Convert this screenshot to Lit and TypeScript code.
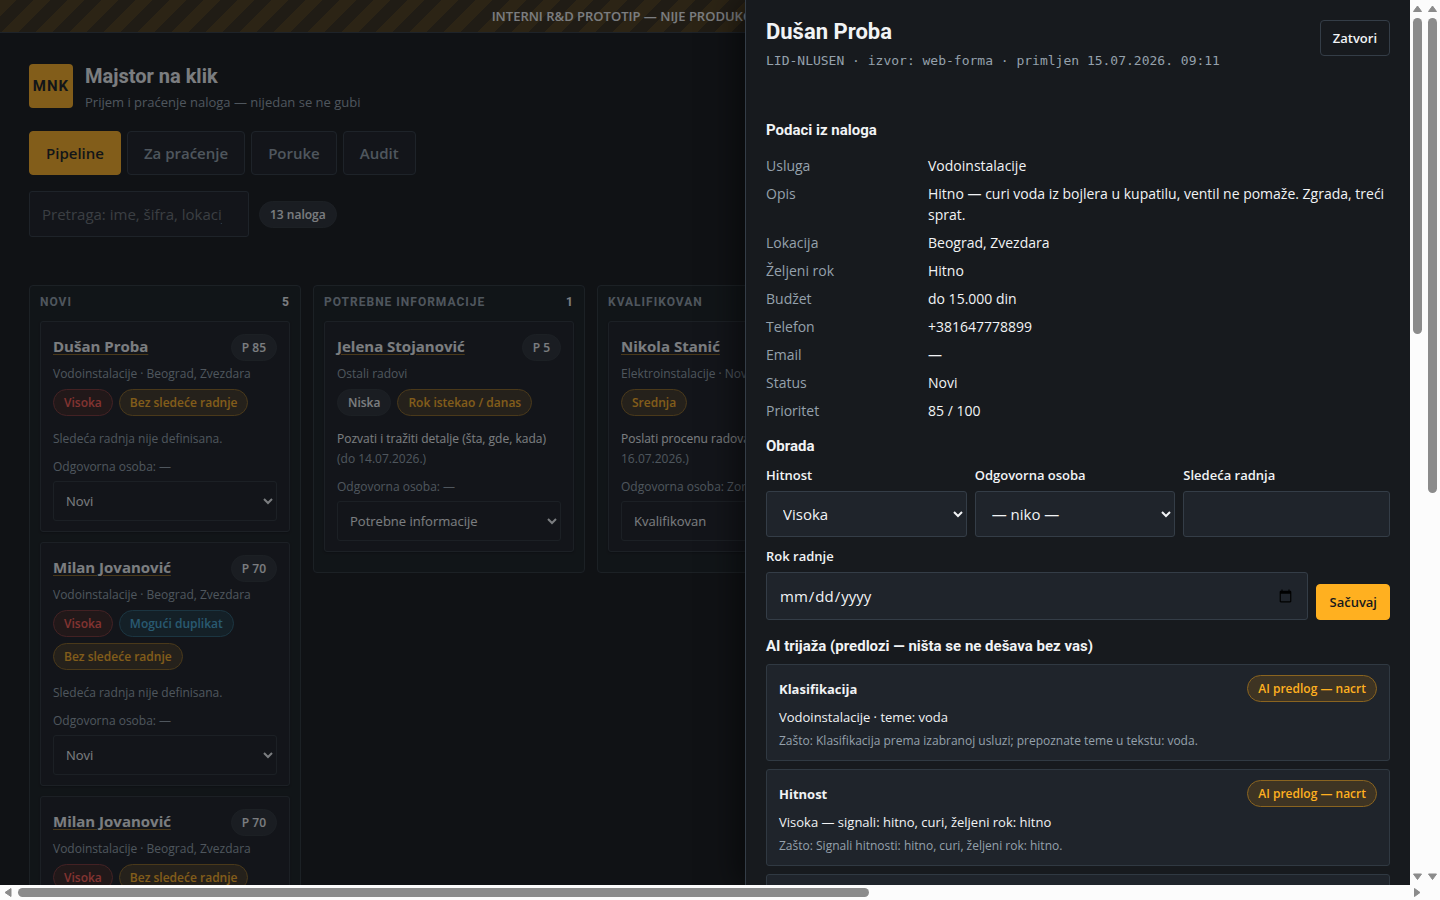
import { LitElement, html, css, svg } from "lit";
import { customElement, property } from "lit/decorators.js";
import { classMap } from "lit/directives/class-map.js";
import { styleMap } from "lit/directives/style-map.js";

type Tone = "danger" | "warn" | "info" | "plain";

interface Tag {
  text: string;
  tone: Tone;
}

interface Lead {
  name: string;
  score: number;
  about: string;
  tags: Tag[];
  next?: string;
  due?: string;
  owner: string;
}

interface Column {
  title: string;
  count: number;
  leads: Lead[];
}

const visoka: Tag = { text: "Visoka", tone: "danger" };
const bezRadnje: Tag = { text: "Bez sledeće radnje", tone: "warn" };

const milan: Lead = {
  name: "Milan Jovanović",
  score: 70,
  about: "Vodoinstalacije · Beograd, Zvezdara",
  tags: [visoka, bezRadnje],
  owner: "—",
};

const columns: Column[] = [
  {
    title: "Novi",
    count: 5,
    leads: [
      { ...milan, name: "Dušan Proba", score: 85 },
      { ...milan, tags: [visoka, { text: "Mogući duplikat", tone: "info" }, bezRadnje] },
      milan,
    ],
  },
  {
    title: "Potrebne informacije",
    count: 1,
    leads: [
      {
        name: "Jelena Stojanović",
        score: 5,
        about: "Ostali radovi",
        tags: [
          { text: "Niska", tone: "plain" },
          { text: "Rok istekao / danas", tone: "warn" },
        ],
        next: "Pozvati i tražiti detalje (šta, gde, kada)",
        due: "(do 14.07.2026.)",
        owner: "—",
      },
    ],
  },
  {
    title: "Kvalifikovan",
    count: 1,
    leads: [
      {
        name: "Nikola Stanić",
        score: 45,
        about: "Elektroinstalacije · Novi Sad",
        tags: [{ text: "Srednja", tone: "warn" }],
        next: "Poslati procenu radova (do",
        due: "16.07.2026.)",
        owner: "Zoran",
      },
    ],
  },
];

const facts: [string, string][] = [
  ["Usluga", "Vodoinstalacije"],
  ["Opis", "Hitno — curi voda iz bojlera u kupatilu, ventil ne pomaže. Zgrada, treći sprat."],
  ["Lokacija", "Beograd, Zvezdara"],
  ["Željeni rok", "Hitno"],
  ["Budžet", "do 15.000 din"],
  ["Telefon", "+381647778899"],
  ["Email", "—"],
  ["Status", "Novi"],
  ["Prioritet", "85 / 100"],
];

const suggestions = [
  {
    title: "Klasifikacija",
    text: "Vodoinstalacije · teme: voda",
    why: "Zašto: Klasifikacija prema izabranoj usluzi; prepoznate teme u tekstu: voda.",
  },
  {
    title: "Hitnost",
    text: "Visoka — signali: hitno, curi, željeni rok: hitno",
    why: "Zašto: Signali hitnosti: hitno, curi, željeni rok: hitno.",
  },
  {
    title: "Prioritet",
    text: "85 / 100",
    why: "Zašto: Hitnost i lokacija su poznati.",
  },
];

@customElement("scroll-track")
class ScrollTrack extends LitElement {
  @property() axis: "x" | "y" = "y";
  @property({ type: Number }) size = 50;

  static styles = css`
    :host {
      display: flex;
      background: #fcfcfc;
    }
    .bar {
      display: flex;
      flex: 1;
      align-items: center;
    }
    .bar.y {
      flex-direction: column;
    }
    .rail {
      display: flex;
      flex: 1;
      align-self: stretch;
      padding: 3px 0;
    }
    .y .rail {
      padding: 0 3px;
    }
    .x .rail {
      flex-direction: column;
    }
    .thumb {
      border-radius: 5px;
      background: #8b8b8b;
      flex: 1;
    }
    svg {
      flex: none;
      fill: #8b8b8b;
      stroke: #8b8b8b;
      stroke-linejoin: round;
    }
  `;

  render() {
    const y = this.axis === "y";
    const arrow = (d: string) =>
      html`<svg width=${y ? 15 : 18} height=${y ? 18 : 15} aria-hidden="true">${svg`<path d=${d} />`}</svg>`;
    const length = `${this.size}%`;
    return html`<div class=${classMap({ bar: true, y, x: !y })}>
      ${arrow(y ? "M7.5 6 L11.5 11.5 H3.5 Z" : "M5 7.5 L11 3.5 V11.5 Z")}
      <div class="rail">
        <div class="thumb" style=${styleMap(y ? { height: length } : { width: length })}></div>
      </div>
      ${arrow(y ? "M7.5 12.5 L11.5 7 H3.5 Z" : "M13 7.5 L7.5 3.5 V11.5 Z")}
    </div>`;
  }
}

@customElement("app-root")
class AppRoot extends LitElement {
  static styles = css`
    :host {
      display: grid;
      grid-template: minmax(0, 1fr) 15px / minmax(0, 1fr) 15px;
      height: 100vh;
      background: #fcfcfc;
      color: #f1f3f5;
      font: 14px/20px "Open Sans", "Noto Sans", sans-serif;
    }
    * {
      box-sizing: border-box;
    }
    h1, h2, h3, p, dl, dd {
      margin: 0;
    }
    button, input, select {
      font: inherit;
      color: inherit;
      margin: 0;
    }
    .stage {
      position: relative;
      overflow: hidden;
      background: #111316;
    }

    .banner {
      height: 33px;
      border-bottom: 1px solid #2e3740;
      background: repeating-linear-gradient(135deg, #4b3a16 0 12px, #342816 12px 24px);
      font-size: 13px;
      line-height: 33px;
      font-weight: 600;
      text-align: center;
      white-space: nowrap;
    }
    .page {
      padding: 31px 29px;
    }
    .brand {
      display: flex;
      gap: 12px;
      height: 50px;
    }
    .logo {
      display: grid;
      place-items: center;
      width: 44px;
      height: 44px;
      border-radius: 4px;
      background: #ffb020;
      color: #16191d;
      font: 700 15px/20px Roboto, sans-serif;
      letter-spacing: 1px;
    }
    h1 {
      font: 700 20px/24px Roboto, sans-serif;
    }
    .brand p {
      margin-top: 4px;
      font-size: 13px;
      color: #95a1ac;
    }
    nav {
      display: flex;
      gap: 6px;
      margin-top: 17px;
    }
    nav button {
      height: 44px;
      padding: 0 16px;
      border: 1px solid #2e3740;
      border-radius: 4px;
      background: #171b20;
      color: #95a1ac;
      font-size: 15px;
      font-weight: 600;
    }
    nav .current {
      border-color: #ffb020;
      background: #ffb020;
      color: #16191d;
    }
    .filters {
      display: flex;
      align-items: center;
      gap: 10px;
      margin-top: 16px;
    }
    .search {
      width: 220px;
      height: 46px;
      padding: 0 12px;
      border: 1px solid #2e3740;
      border-radius: 3px;
      background: #171b20;
      font-size: 15px;
    }
    .search::placeholder {
      color: #6b7075;
    }
    .pill {
      flex: none;
      padding: 3px 10px;
      border: 1px solid #2b3035;
      border-radius: 14px;
      background: #262b31;
      font-size: 12px;
      line-height: 19px;
      font-weight: 600;
      white-space: nowrap;
    }
    .pill.danger {
      border-color: #7c3434;
      background: #35201f;
      color: #ff5a50;
    }
    .pill.warn {
      border-color: #8a6420;
      background: #3e3423;
      color: #ffb020;
    }
    .pill.info {
      border-color: #295d72;
      background: #1b303b;
      color: #45aad6;
    }

    .board {
      display: flex;
      align-items: flex-start;
      gap: 12px;
      margin-top: 48px;
    }
    .column {
      flex: none;
      width: 272px;
      padding: 6px 10px 10px;
      border: 1px solid #2a3238;
      border-radius: 4px;
      background: #14191c;
    }
    .column header {
      display: flex;
      justify-content: space-between;
      margin-bottom: 8px;
      padding-right: 1px;
      font: 700 12px/21px Roboto, sans-serif;
    }
    .column h2 {
      font: inherit;
      letter-spacing: 1px;
      text-transform: uppercase;
      color: #95a1ac;
    }
    .lead {
      margin-bottom: 10px;
      padding: 12px 12px 10px;
      border: 1px solid #2a3138;
      border-radius: 3px;
      background: #171b20;
      box-shadow: 0 1px 2px rgba(0, 0, 0, 0.4);
      font-size: 12px;
    }
    .lead .head {
      display: flex;
      justify-content: space-between;
      align-items: flex-start;
    }
    .name {
      padding: 0;
      border: 0;
      background: none;
      font-size: 15px;
      line-height: 24px;
      font-weight: 700;
      text-decoration: underline #8a6420;
      text-underline-offset: 2px;
    }
    .muted {
      color: #95a1ac;
    }
    .about {
      margin-top: 3px;
    }
    .tags {
      display: flex;
      flex-wrap: wrap;
      gap: 6px;
      margin: 5px 0 13px;
    }
    .owner {
      margin-top: 8px;
    }
    .lead select {
      width: 100%;
      height: 40px;
      margin-top: 4px;
      padding: 0 8px;
      border: 1px solid #2a3138;
      border-radius: 3px;
      background: #171b20;
      font-size: 13px;
    }

    .backdrop {
      position: absolute;
      inset: 0;
      background: rgba(16, 18, 21, 0.52);
    }
    .drawer {
      position: absolute;
      inset: 0 0 0 auto;
      display: flex;
      width: min(680px, 100%);
      border-left: 1px solid #343d47;
      background: #171a1e;
      box-shadow: -8px 0 30px rgba(0, 0, 0, 0.5);
    }
    .body {
      flex: 1;
      min-width: 0;
      padding: 20px;
      overflow-y: auto;
      scrollbar-width: none;
    }
    .drawer .top {
      display: flex;
      justify-content: space-between;
      align-items: flex-start;
      margin-bottom: 47px;
    }
    .top h2 {
      font: 700 22px/24px Roboto, sans-serif;
    }
    .meta {
      margin-top: 7px;
      color: #95a1ac;
      font: 13px/20px "DejaVu Sans Mono", monospace;
    }
    .small {
      flex: none;
      height: 36px;
      padding: 0 12px;
      border: 1px solid #343d47;
      border-radius: 4px;
      background: none;
      font-size: 13px;
      font-weight: 600;
    }
    .small.primary {
      border-color: #ffb020;
      background: #ffb020;
      color: #16191d;
    }
    h3 {
      margin-bottom: 6px;
      font: 700 15px/24px Roboto, sans-serif;
    }
    dl {
      display: grid;
      grid-template-columns: 150px minmax(0, 1fr);
      gap: 7px 12px;
      margin: 13px 0;
      line-height: 21px;
    }
    dt {
      color: #95a1ac;
    }
    .fields {
      display: flex;
      align-items: flex-end;
      gap: 8px;
      margin-bottom: 8px;
    }
    .fields.last {
      margin-bottom: 14px;
    }
    .field {
      display: flex;
      flex: 1;
      flex-direction: column;
      gap: 5px;
      min-width: 0;
    }
    .field.wide {
      flex-basis: 6px;
    }
    .field label {
      font-size: 13px;
      font-weight: 600;
      line-height: 22px;
    }
    .field input,
    .field select {
      width: 100%;
      height: 46px;
      padding: 0 12px;
      border: 1px solid #343d47;
      border-radius: 3px;
      background: #1f242b;
      font-size: 15px;
    }
    .field .date {
      height: 48px;
    }
    .suggestions {
      display: grid;
      gap: 8px;
    }
    .suggestion {
      padding: 10px 12px;
      border: 1px solid #303942;
      border-radius: 3px;
      background: #1f242b;
      font-size: 13px;
    }
    .suggestion .head {
      display: flex;
      justify-content: space-between;
      align-items: center;
      margin-bottom: 5px;
    }
    .why {
      margin-top: 4px;
      color: #95a1ac;
      font-size: 12px;
      line-height: 19px;
    }
  `;

  private lead(lead: Lead, stage: string) {
    return html`<article class="lead">
      <div class="head">
        <button class="name">${lead.name}</button>
        <span class="pill">P ${lead.score}</span>
      </div>
      <p class="about muted">${lead.about}</p>
      <div class="tags">
        ${lead.tags.map((t) => html`<span class=${classMap({ pill: true, [t.tone]: true })}>${t.text}</span>`)}
      </div>
      ${lead.next
        ? html`<p>${lead.next}<br /><span class="muted">${lead.due}</span></p>`
        : html`<p class="muted">Sledeća radnja nije definisana.</p>`}
      <p class="owner muted">Odgovorna osoba: ${lead.owner}</p>
      <select aria-label="Status naloga">
        <option>${stage}</option>
      </select>
    </article>`;
  }

  private drawer() {
    return html`<aside class="drawer" role="dialog" aria-labelledby="who">
      <div class="body">
        <div class="top">
          <div>
            <h2 id="who">Dušan Proba</h2>
            <p class="meta">LID-NLUSEN · izvor: web-forma · primljen 15.07.2026. 09:11</p>
          </div>
          <button class="small">Zatvori</button>
        </div>
        <h3>Podaci iz naloga</h3>
        <dl>
          ${facts.map(([k, v]) => html`<dt>${k}</dt><dd>${v}</dd>`)}
        </dl>
        <h3>Obrada</h3>
        <div class="fields">
          <div class="field">
            <label for="urgency">Hitnost</label>
            <select id="urgency"><option>Visoka</option></select>
          </div>
          <div class="field">
            <label for="owner">Odgovorna osoba</label>
            <select id="owner"><option>— niko —</option></select>
          </div>
          <div class="field wide">
            <label for="action">Sledeća radnja</label>
            <input id="action" type="text" />
          </div>
        </div>
        <div class="fields last">
          <div class="field">
            <label for="due">Rok radnje</label>
            <input id="due" class="date" type="date" />
          </div>
          <button class="small primary">Sačuvaj</button>
        </div>
        <h3>AI trijaža (predlozi — ništa se ne dešava bez vas)</h3>
        <div class="suggestions">
          ${suggestions.map(
            (s) => html`<section class="suggestion">
              <div class="head"><strong>${s.title}</strong><span class="pill warn">AI predlog — nacrt</span></div>
              <p>${s.text}</p>
              <p class="why">${s.why}</p>
            </section>`,
          )}
        </div>
      </div>
      <scroll-track axis="y" size="37.2"></scroll-track>
    </aside>`;
  }

  render() {
    return html`
      <div class="stage">
        <div class="banner">INTERNI R&amp;D PROTOTIP — NIJE PRODUKCIJA — SAMO FIKTIVNI PODACI</div>
        <main class="page">
          <div class="brand">
            <div class="logo">MNK</div>
            <div>
              <h1>Majstor na klik</h1>
              <p>Prijem i praćenje naloga — nijedan se ne gubi</p>
            </div>
          </div>
          <nav>
            <button class="current">Pipeline</button>
            <button>Za praćenje</button>
            <button>Poruke</button>
            <button>Audit</button>
          </nav>
          <div class="filters">
            <input class="search" type="search" aria-label="Pretraga" placeholder="Pretraga: ime, šifra, lokacija" />
            <span class="pill">13 naloga</span>
          </div>
          <div class="board">
            ${columns.map(
              (c) => html`<section class="column">
                <header><h2>${c.title}</h2><span>${c.count}</span></header>
                ${c.leads.map((l) => this.lead(l, c.title))}
              </section>`,
            )}
          </div>
        </main>
        <div class="backdrop"></div>
        ${this.drawer()}
      </div>
      <scroll-track axis="y" size="56"></scroll-track>
      <scroll-track axis="x" size="61.3"></scroll-track>
    `;
  }
}
